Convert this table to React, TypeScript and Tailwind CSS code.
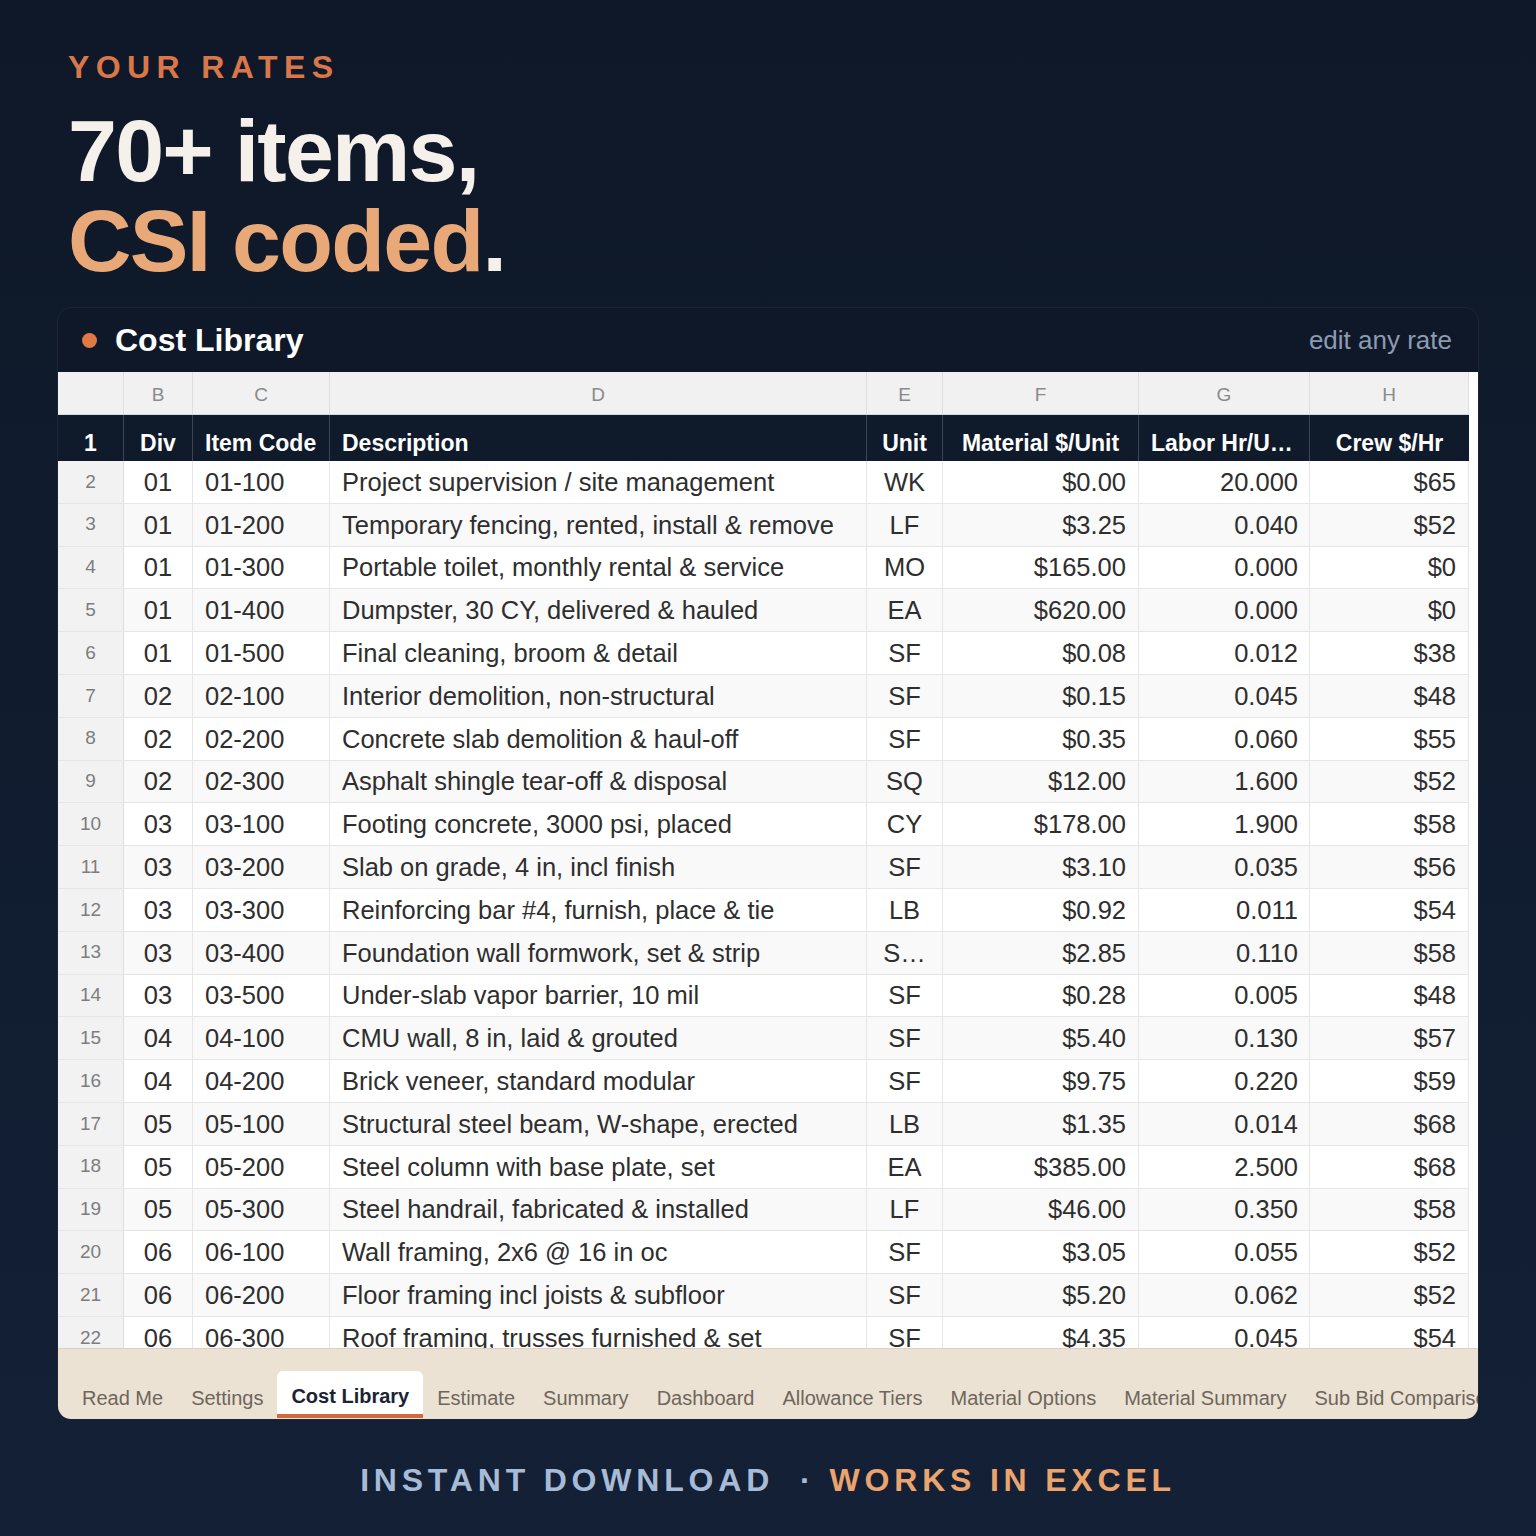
import React from "react";

const cols = "grid grid-cols-[66px_69px_137px_537px_76px_196px_171px_159px]";

const rows: string[][] = [
  ["2", "01", "01-100", "Project supervision / site management", "WK", "$0.00", "20.000", "$65"],
  ["3", "01", "01-200", "Temporary fencing, rented, install & remove", "LF", "$3.25", "0.040", "$52"],
  ["4", "01", "01-300", "Portable toilet, monthly rental & service", "MO", "$165.00", "0.000", "$0"],
  ["5", "01", "01-400", "Dumpster, 30 CY, delivered & hauled", "EA", "$620.00", "0.000", "$0"],
  ["6", "01", "01-500", "Final cleaning, broom & detail", "SF", "$0.08", "0.012", "$38"],
  ["7", "02", "02-100", "Interior demolition, non-structural", "SF", "$0.15", "0.045", "$48"],
  ["8", "02", "02-200", "Concrete slab demolition & haul-off", "SF", "$0.35", "0.060", "$55"],
  ["9", "02", "02-300", "Asphalt shingle tear-off & disposal", "SQ", "$12.00", "1.600", "$52"],
  ["10", "03", "03-100", "Footing concrete, 3000 psi, placed", "CY", "$178.00", "1.900", "$58"],
  ["11", "03", "03-200", "Slab on grade, 4 in, incl finish", "SF", "$3.10", "0.035", "$56"],
  ["12", "03", "03-300", "Reinforcing bar #4, furnish, place & tie", "LB", "$0.92", "0.011", "$54"],
  ["13", "03", "03-400", "Foundation wall formwork, set & strip", "S…", "$2.85", "0.110", "$58"],
  ["14", "03", "03-500", "Under-slab vapor barrier, 10 mil", "SF", "$0.28", "0.005", "$48"],
  ["15", "04", "04-100", "CMU wall, 8 in, laid & grouted", "SF", "$5.40", "0.130", "$57"],
  ["16", "04", "04-200", "Brick veneer, standard modular", "SF", "$9.75", "0.220", "$59"],
  ["17", "05", "05-100", "Structural steel beam, W-shape, erected", "LB", "$1.35", "0.014", "$68"],
  ["18", "05", "05-200", "Steel column with base plate, set", "EA", "$385.00", "2.500", "$68"],
  ["19", "05", "05-300", "Steel handrail, fabricated & installed", "LF", "$46.00", "0.350", "$58"],
  ["20", "06", "06-100", "Wall framing, 2x6 @ 16 in oc", "SF", "$3.05", "0.055", "$52"],
  ["21", "06", "06-200", "Floor framing incl joists & subfloor", "SF", "$5.20", "0.062", "$52"],
  ["22", "06", "06-300", "Roof framing, trusses furnished & set", "SF", "$4.35", "0.045", "$54"],
];

const tabs = [
  "Read Me",
  "Settings",
  "Cost Library",
  "Estimate",
  "Summary",
  "Dashboard",
  "Allowance Tiers",
  "Material Options",
  "Material Summary",
  "Sub Bid Comparison",
];

export default function App() {
  return (
    <div
      className="w-[1536px] h-[1536px] overflow-hidden bg-gradient-to-b from-[#0e1828] to-[#132036] pt-[51px]"
      style={{ fontFamily: '"Liberation Sans", Arial, sans-serif' }}
    >
      {/* heading */}
      <div className="pl-[68px]">
        <div className="text-[32px] leading-none font-bold tracking-[0.2em] text-[#d9774a]">YOUR RATES</div>
        <h1 className="mt-[23px] text-[88px] leading-[90px] font-bold tracking-[-0.02em] text-[#f5f1ea]">
          70+ items,
          <br />
          <span className="text-[#e9a877]">CSI coded</span>.
        </h1>
      </div>

      {/* card */}
      <div className="mx-[57px] mt-[21px] h-[1113px] rounded-[14px] overflow-hidden bg-[#0f1829] border border-[#1c2638] flex flex-col">
        <div className="h-[64px] shrink-0 flex items-center justify-between pl-[24px] pr-[26px]">
          <div className="flex items-center gap-[18px]">
            <span className="w-[15px] h-[15px] rounded-full bg-[#e07a45]" />
            <span className="text-[32px] font-bold text-white">Cost Library</span>
          </div>
          <span className="text-[26px] text-[#8d9bb0]">edit any rate</span>
        </div>

        <div className="h-[976px] shrink-0 bg-white overflow-hidden">
          <div className="w-[1411px]">
            {/* column letters */}
            <div className={`${cols} h-[43px] bg-[#f1f1f1] text-[19px] text-[#8a8a8a] border-b border-[#d8d8d8]`}>
              {["", "B", "C", "D", "E", "F", "G", "H"].map((l, i) => (
                <div key={i} className="flex items-center justify-center pt-[4px] border-r border-[#dedede]">
                  {l}
                </div>
              ))}
            </div>

            {/* header row */}
            <div className={`${cols} h-[46px] bg-[#0f1a2b] text-white font-bold text-[23px]`}>
              <div className="flex items-center justify-center pt-[10px] border-r border-[#3a4556]">1</div>
              <div className="flex items-center justify-center pt-[10px] border-r border-[#3a4556]">Div</div>
              <div className="flex items-center pl-[12px] pt-[10px] border-r border-[#3a4556]">Item Code</div>
              <div className="flex items-center pl-[12px] pt-[10px] border-r border-[#3a4556]">Description</div>
              <div className="flex items-center justify-center pt-[10px] border-r border-[#3a4556]">Unit</div>
              <div className="flex items-center justify-center pt-[10px] border-r border-[#3a4556]">Material $/Unit</div>
              <div className="flex items-center pl-[12px] pt-[10px] border-r border-[#3a4556]">Labor Hr/U…</div>
              <div className="flex items-center justify-center pt-[10px]">Crew $/Hr</div>
            </div>

            {/* data rows */}
            {rows.map((r, idx) => (
              <div
                key={r[0]}
                className={`${cols} h-[42.8px] text-[25.5px] text-[#2e2e2e] border-b border-[#e6e6e6] ${
                  idx % 2 === 1 ? "bg-[#f9f9f9]" : "bg-white"
                }`}
              >
                <div className="flex items-center justify-center bg-[#f2f2f2] text-[19px] text-[#7d7d7d] border-r border-[#dedede]">
                  {r[0]}
                </div>
                <div className="flex items-center justify-center border-r border-[#e6e6e6]">{r[1]}</div>
                <div className="flex items-center pl-[12px] border-r border-[#e6e6e6]">{r[2]}</div>
                <div className="flex items-center pl-[12px] border-r border-[#e6e6e6] whitespace-nowrap overflow-hidden">
                  {r[3]}
                </div>
                <div className="flex items-center justify-center border-r border-[#e6e6e6]">{r[4]}</div>
                <div className="flex items-center justify-end pr-[12px] border-r border-[#e6e6e6]">{r[5]}</div>
                <div className="flex items-center justify-end pr-[11px] border-r border-[#e6e6e6]">{r[6]}</div>
                <div className="flex items-center justify-end pr-[12px] border-r border-[#e6e6e6]">{r[7]}</div>
              </div>
            ))}
          </div>
        </div>

        {/* sheet tabs */}
        <div className="flex-1 bg-[#ebe2d3] flex items-end pl-[10px] overflow-hidden border-t border-[#d9d0c2]">
          {tabs.map((t) => {
            const active = t === "Cost Library";
            return (
              <div
                key={t}
                className={`shrink-0 whitespace-nowrap px-[14px] pt-[6px] h-[47px] mb-[1px] flex items-center text-[20px] ${
                  active
                    ? "bg-white rounded-t-[6px] font-bold text-[#1b2333] border-b-[4px] border-[#d2693a]"
                    : "text-[#6e665b]"
                }`}
              >
                {t}
              </div>
            );
          })}
        </div>
      </div>

      {/* footer */}
      <div className="mt-[44px] flex justify-center text-[32px] leading-none font-bold tracking-[0.15em]">
        <span className="text-[#a8bbd6]">INSTANT DOWNLOAD</span>
        <span className="ml-[26px] mr-[14px] text-[#a8bbd6]">·</span>
        <span className="text-[#eba46e]">WORKS IN EXCEL</span>
      </div>
    </div>
  );
}
